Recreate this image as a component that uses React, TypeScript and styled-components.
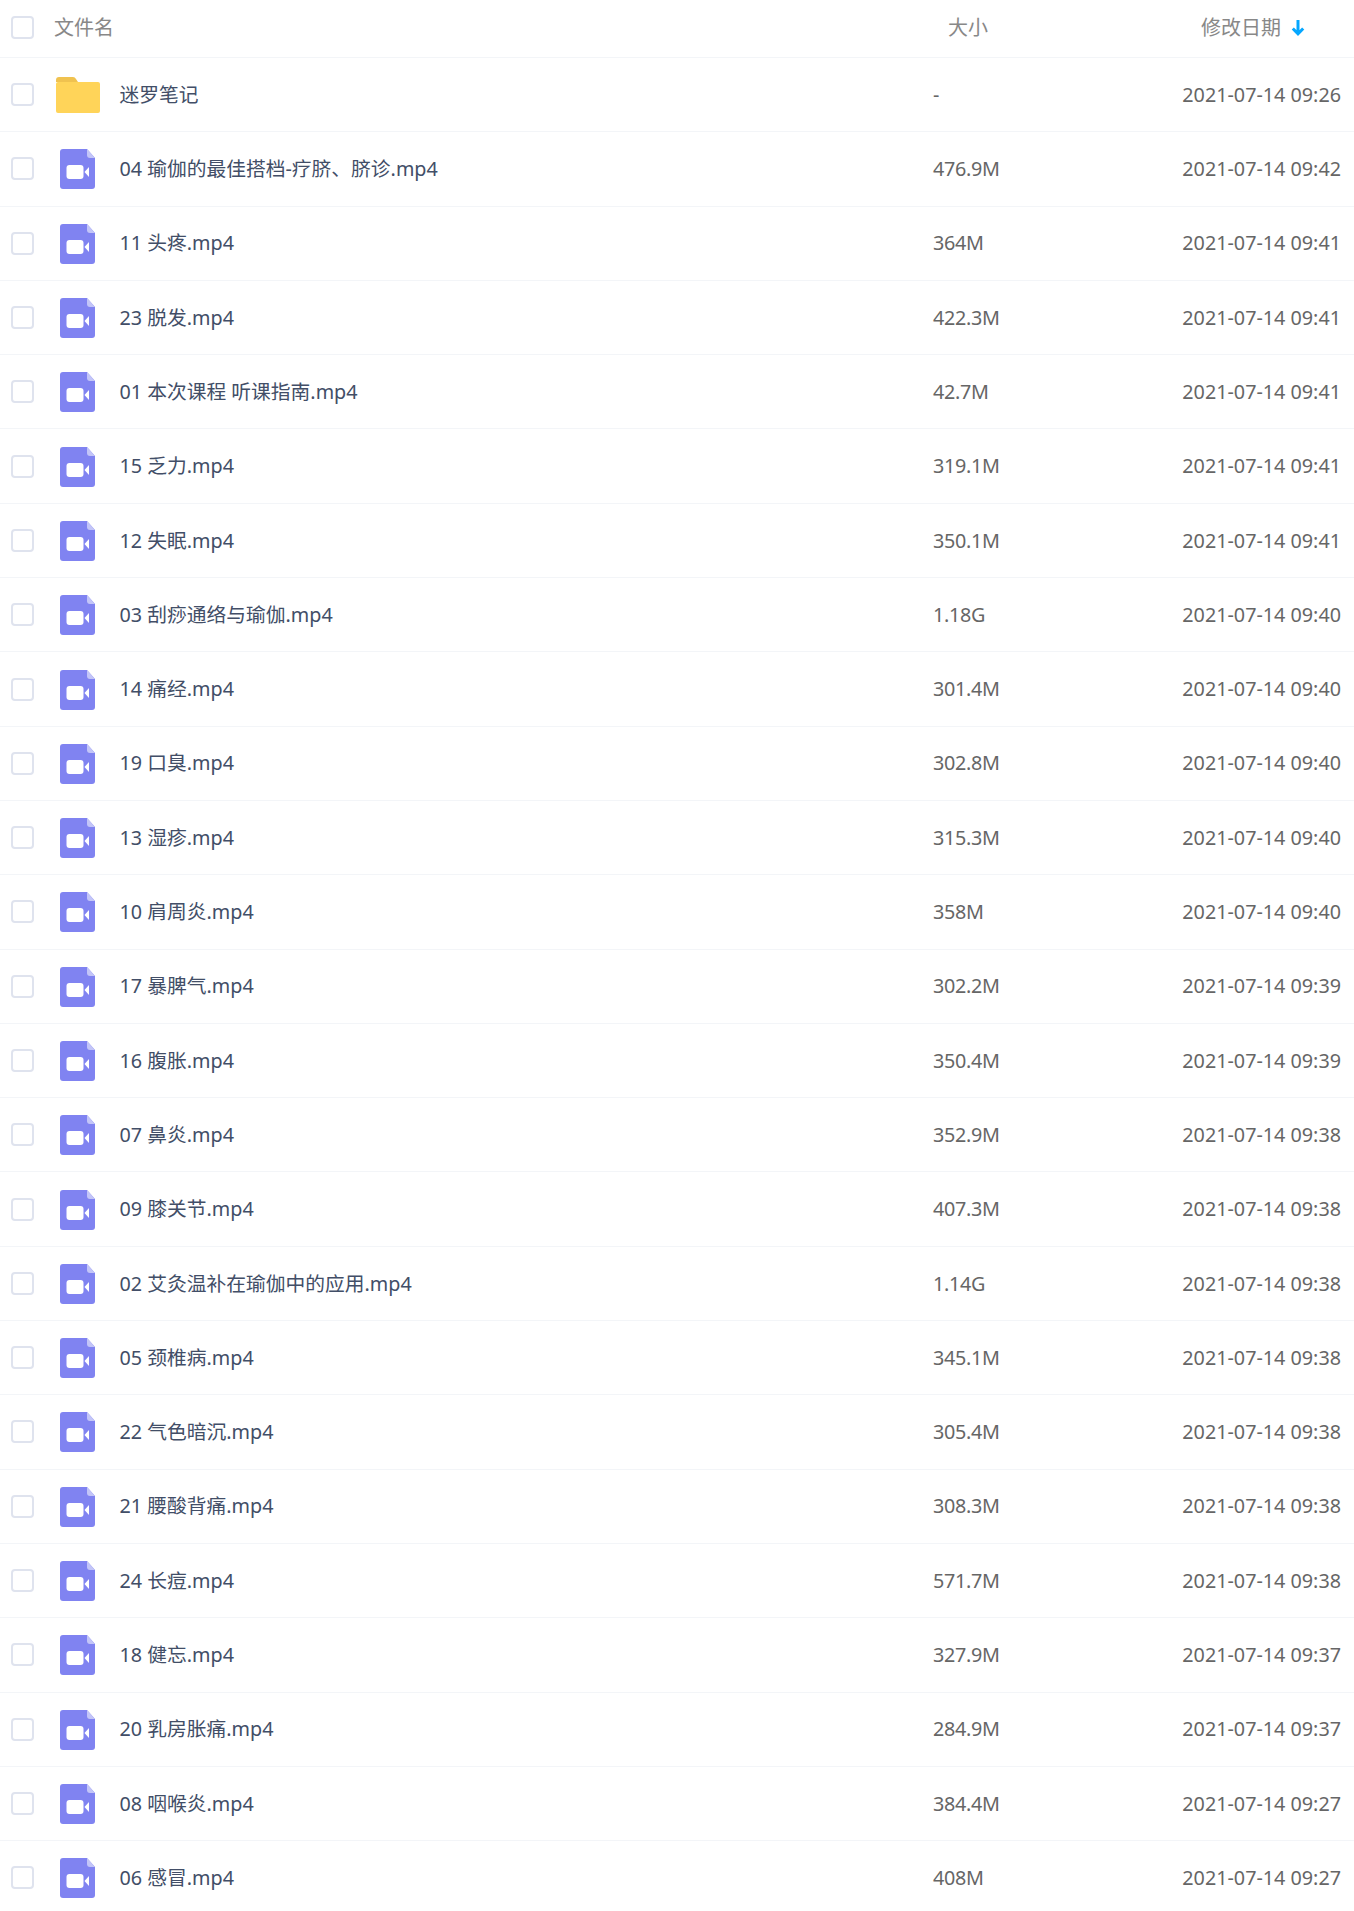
import React from "react";
import styled, { createGlobalStyle } from "styled-components";

interface FileItem {
    name: string;
    size: string;
    date: string;
    folder?: boolean;
}

const files: FileItem[] = [
    { name: "迷罗笔记", size: "-", date: "2021-07-14 09:26", folder: true },
    { name: "04 瑜伽的最佳搭档-疗脐、脐诊.mp4", size: "476.9M", date: "2021-07-14 09:42" },
    { name: "11 头疼.mp4", size: "364M", date: "2021-07-14 09:41" },
    { name: "23 脱发.mp4", size: "422.3M", date: "2021-07-14 09:41" },
    { name: "01 本次课程 听课指南.mp4", size: "42.7M", date: "2021-07-14 09:41" },
    { name: "15 乏力.mp4", size: "319.1M", date: "2021-07-14 09:41" },
    { name: "12 失眠.mp4", size: "350.1M", date: "2021-07-14 09:41" },
    { name: "03 刮痧通络与瑜伽.mp4", size: "1.18G", date: "2021-07-14 09:40" },
    { name: "14 痛经.mp4", size: "301.4M", date: "2021-07-14 09:40" },
    { name: "19 口臭.mp4", size: "302.8M", date: "2021-07-14 09:40" },
    { name: "13 湿疹.mp4", size: "315.3M", date: "2021-07-14 09:40" },
    { name: "10 肩周炎.mp4", size: "358M", date: "2021-07-14 09:40" },
    { name: "17 暴脾气.mp4", size: "302.2M", date: "2021-07-14 09:39" },
    { name: "16 腹胀.mp4", size: "350.4M", date: "2021-07-14 09:39" },
    { name: "07 鼻炎.mp4", size: "352.9M", date: "2021-07-14 09:38" },
    { name: "09 膝关节.mp4", size: "407.3M", date: "2021-07-14 09:38" },
    { name: "02 艾灸温补在瑜伽中的应用.mp4", size: "1.14G", date: "2021-07-14 09:38" },
    { name: "05 颈椎病.mp4", size: "345.1M", date: "2021-07-14 09:38" },
    { name: "22 气色暗沉.mp4", size: "305.4M", date: "2021-07-14 09:38" },
    { name: "21 腰酸背痛.mp4", size: "308.3M", date: "2021-07-14 09:38" },
    { name: "24 长痘.mp4", size: "571.7M", date: "2021-07-14 09:38" },
    { name: "18 健忘.mp4", size: "327.9M", date: "2021-07-14 09:37" },
    { name: "20 乳房胀痛.mp4", size: "284.9M", date: "2021-07-14 09:37" },
    { name: "08 咽喉炎.mp4", size: "384.4M", date: "2021-07-14 09:27" },
    { name: "06 感冒.mp4", size: "408M", date: "2021-07-14 09:27" },
];

const FolderIcon = () => (
    <svg width="44" height="36" viewBox="0 0 44 36">
        <path d="M0 3a3 3 0 0 1 3-3h14a4 4 0 0 1 3 2l2 3H0z" fill="#f0c24f" />
        <path d="M0 7a2 2 0 0 1 2-2h40a2 2 0 0 1 2 2v27a2 2 0 0 1-2 2H2a2 2 0 0 1-2-2z" fill="#ffd459" />
    </svg>
);

const VideoIcon = () => (
    <svg width="35" height="40" viewBox="0 0 35 40">
        <path d="M3 0h24l8 9v28a3 3 0 0 1-3 3H3a3 3 0 0 1-3-3V3a3 3 0 0 1 3-3z" fill="#8083f1" />
        <path d="M27 0l8 9h-5a3 3 0 0 1-3-3z" fill="#c3c5f8" />
        <rect x="6.5" y="16" width="17" height="14" rx="3" fill="#fff" />
        <path d="M24.5 23l4.5-5v10z" fill="#fff" />
    </svg>
);

const App: React.FC = () => {
    return (
        <Page>
            <GlobalStyle />
            <HeaderRow>
                <Checkbox />
                <HeaderName>文件名</HeaderName>
                <HeaderSize>大小</HeaderSize>
                <HeaderDate>
                    修改日期
                    <svg width="14" height="17" viewBox="0 0 14 17">
                        <path d="M7 1v13M1.8 9.5L7 14.8l5.2-5.3" fill="none" stroke="#06a7ff" strokeWidth="3" />
                    </svg>
                </HeaderDate>
            </HeaderRow>
            {files.map((file) => (
                <FileRow key={file.name}>
                    <Checkbox />
                    <IconCell>{file.folder ? <FolderIcon /> : <VideoIcon />}</IconCell>
                    <FileName>{file.name}</FileName>
                    <FileSize>{file.size}</FileSize>
                    <FileDate>{file.date}</FileDate>
                </FileRow>
            ))}
        </Page>
    );
};

export default App;

const GlobalStyle = createGlobalStyle`
    html, body {
        margin: 0;
        padding: 0;
        background: #fff;
    }
    body {
        font-family: "Noto Sans", "Noto Sans CJK SC", sans-serif;
        font-size: 19.75px;
    }
`;

const Page = styled.div`
    width: 1354px;
    height: 1911px;
    overflow: hidden;
`;

const HeaderRow = styled.div`
    display: grid;
    grid-template-columns: 54px 879px 249px 1fr;
    align-items: center;
    height: 58px;
    padding-bottom: 2px;
    border-bottom: 1px solid #f3f5f8;
    box-sizing: border-box;
    color: #888;
    line-height: 1;
    font-size: 20px;
`;

const HeaderName = styled.div``;

const HeaderSize = styled.div`
    padding-left: 15px;
`;

const HeaderDate = styled.div`
    display: flex;
    align-items: center;
    gap: 10px;
    padding-left: 19px;
`;

const FileRow = styled.div`
    display: grid;
    grid-template-columns: 54px 65.5px 813.5px 249px 1fr;
    align-items: center;
    height: 74.3px;
    border-bottom: 1px solid #f3f5f8;
    box-sizing: border-box;
    line-height: 1;
`;

const Checkbox = styled.span`
    display: block;
    width: 23px;
    height: 23px;
    margin-left: 11px;
    border: 2px solid #dfe3ee;
    border-radius: 4px;
    box-sizing: border-box;
    background: #fff;
`;

const IconCell = styled.div`
    display: flex;
    align-items: center;
    justify-content: center;
    padding-right: 18px;
    padding-top: 1px;
`;

const FileName = styled.div`
    color: #424e67;
`;

const FileSize = styled.div`
    color: #666;
    letter-spacing: -0.3px;
`;

const FileDate = styled.div`
    color: #666;
    justify-self: end;
    padding-right: 13px;
`;
